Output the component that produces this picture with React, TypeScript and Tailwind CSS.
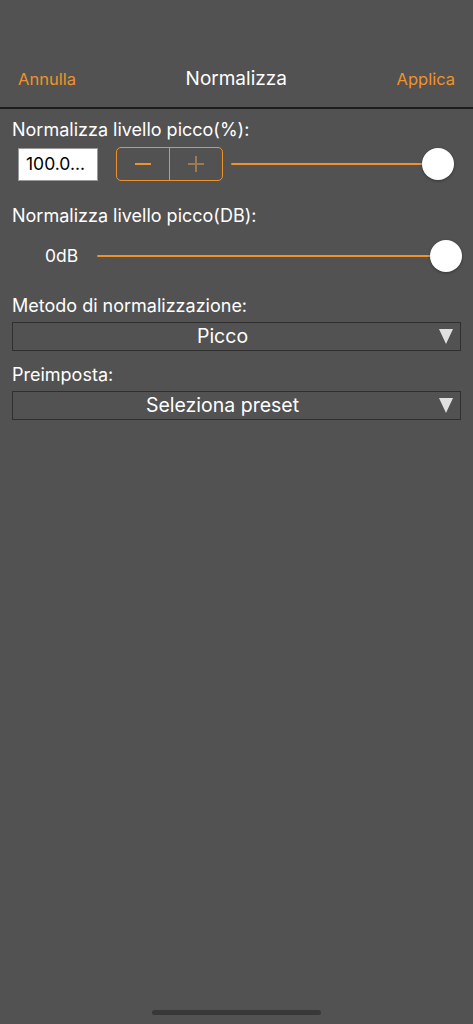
import React from "react";

function Slider() {
  return (
    <div className="relative flex-1 h-[34px] flex items-center">
      <div className="h-[2px] w-full bg-[#f0922a] rounded-full" />
      <div className="absolute right-0 top-[1px] w-[32px] h-[32px] rounded-full bg-white shadow-[0_1px_3px_rgba(0,0,0,0.35)]" />
    </div>
  );
}

function Select({ label }: { label: string }) {
  return (
    <div className="relative h-[29px] mx-[12px] border border-[#2f2f2f] flex items-center justify-center pr-[28px]">
      <span className="text-[19.5px] text-white leading-none">{label}</span>
      <span className="absolute right-[7px] top-[6px] w-0 h-0 border-l-[7px] border-r-[7px] border-t-[15px] border-l-transparent border-r-transparent border-t-[#e0e0e0]" />
    </div>
  );
}

export default function App() {
  return (
    <div
      className="w-[473px] h-[1024px] bg-[#525252] relative overflow-hidden text-white"
      style={{ fontFamily: "Inter, 'Noto Sans', sans-serif" }}
    >
      <div className="h-[56px]" />
      <div className="h-[51px] flex items-center justify-between px-[18px] pb-[4px]">
        <span className="text-[16.5px] text-[#f0922a]">Annulla</span>
        <span className="text-[19px] text-white">Normalizza</span>
        <span className="text-[16.5px] text-[#f0922a]">Applica</span>
      </div>
      <div className="h-[2px] bg-[#1c1c1c]" />

      <div className="pt-[11px] px-[12px] text-[18px] leading-[20px]">Normalizza livello picco(%):</div>
      <div className="flex items-center pl-[18px] pr-[19px] mt-[7px] h-[34px]">
        <div className="w-[80px] h-[33px] bg-white border border-[#9a9a9a] flex items-center pl-[7px] text-[17.5px] text-black">
          100.0...
        </div>
        <div className="ml-[18px] w-[107px] h-[34px] border border-[#f0922a] rounded-[5px] flex">
          <div className="flex-1 flex items-center justify-center border-r border-[#f0922a]">
            <div className="w-[16px] h-[2px] bg-[#f0922a]" />
          </div>
          <div className="flex-1 flex items-center justify-center relative">
            <div className="w-[16px] h-[2px] bg-[#9b7a55]" />
            <div className="absolute w-[2px] h-[16px] bg-[#9b7a55]" />
          </div>
        </div>
        <div className="ml-[8px] flex-1 flex">
          <Slider />
        </div>
      </div>

      <div className="pt-[25px] px-[12px] text-[18px] leading-[20px]">Normalizza livello picco(DB):</div>
      <div className="flex items-center pl-[45px] pr-[11px] mt-[13px] h-[34px]">
        <span className="text-[17.5px] w-[52px]">0dB</span>
        <Slider />
      </div>

      <div className="pt-[23px] px-[12px] text-[18px] leading-[20px]">Metodo di normalizzazione:</div>
      <div className="mt-[6px]">
        <Select label="Picco" />
      </div>
      <div className="pt-[14px] px-[12px] text-[18px] leading-[20px]">Preimposta:</div>
      <div className="mt-[6px]">
        <Select label="Seleziona preset" />
      </div>

      <div className="absolute bottom-[9px] left-[152px] w-[169px] h-[5px] rounded-full bg-[#383838]" />
    </div>
  );
}
